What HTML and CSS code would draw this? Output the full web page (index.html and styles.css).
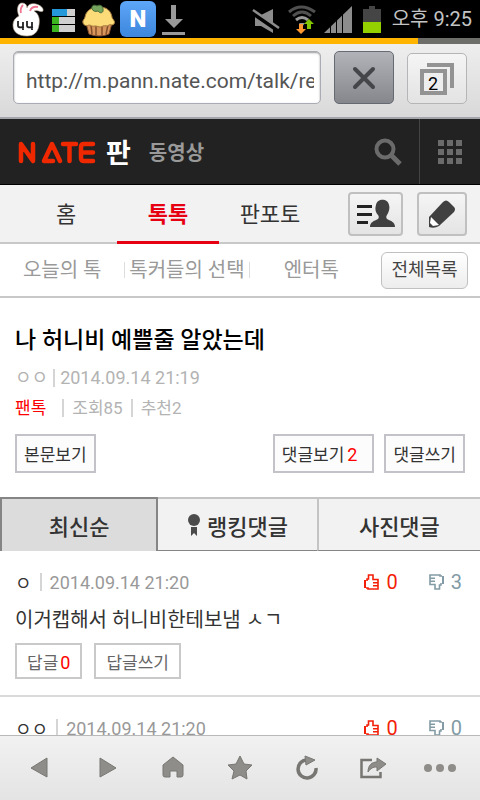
FILE: index.html
```
<!DOCTYPE html>
<html lang="ko">
<head>
<meta charset="UTF-8">
<meta name="viewport" content="width=device-width, initial-scale=1.0">
<title>나 허니비 예쁠줄 알았는데 | 네이트 판</title>
<link rel="stylesheet" href="styles.css">
</head>
<body>
  <!-- 공용 아이콘 -->
  <svg class="defs" aria-hidden="true">
    <symbol id="thumb" viewBox="0 0 16 16">
      <path d="M0 6h2v8H0z" fill="currentColor"/>
      <path d="M2 14h2v1h10V5.500H9V1H4.500v4H3v2" fill="none" stroke="currentColor" stroke-width="1.600"/>
      <path d="M9 8.700h5M9 11.800h5" stroke="currentColor" stroke-width="1.400"/>
    </symbol>
  </svg>

  <!-- 상태 표시줄 -->
  <div class="status">
    <div class="status-left">
      <svg width="34" height="36" viewBox="0 0 34 36">
        <path d="M7 15C4 8 6 2 10 2c4 0 5 3 5 5 1-4 5-5 9-4 4 1 8 4 7 7-2 2-6-2-9 0 5 3 6 8 5 14-1 8-6 11-12 11C6 35 1 31 1 24c0-4 2-7 6-9z" fill="#fff" stroke="#b9a692" stroke-width=".6"/>
        <path d="M9 12C8 8 9 6 11 4M18 10c1-3 3-5 8-4" fill="none" stroke="#ef7590" stroke-width="1.800"/>
        <path d="M6 20v5q0 2 6 1M11 21v8M15 20v5q0 2 6 1M20 21v8" fill="none" stroke="#222" stroke-width="1.800"/>
      </svg>
      <svg width="28" height="36" viewBox="0 0 28 36">
        <path d="M2 8h23v7H2zM2 16h23v7H2zM2 24h23v7H2z" fill="#cfcfcf"/>
        <path d="M2 8h15v7H2z" fill="#2498d8"/>
        <path d="M2 16h7v7H2zM2 24h7v7H2z" fill="#3cb521"/>
      </svg>
      <svg width="34" height="36" viewBox="0 0 34 36">
        <path d="M4 22l3 11q10 4 20 0l3-11z" fill="#d7965b" stroke="#87502c"/>
        <path d="M9 24l1 9M14 25v9M20 25v9M26 24l-2 9" stroke="#87502c" stroke-width="1.500"/>
        <path d="M1 22C0 19 3 18 3 16 4 10 9 6 17 6s12 4 13 10c0 2 4 4 2 7-2 2-4 0-5 1-2 2-4 0-6 1-3 2-5 0-8 0-3 1-4-1-6-1-2 1-5 1-6-2z" fill="#fbdc78" stroke="#a5773e"/>
        <path d="M10 8c-1-3 2-5 5-3 3-2 6 0 6 3 1 4-3 5-5 2-3 1-5 0-6-2z" fill="#75a45f" stroke="#4a6f3b"/>
      </svg>
      <div class="app-n">N</div>
      <svg width="28" height="36" viewBox="0 0 28 36">
        <path d="M11 4h5v14h7l-9 9-9-9h6zM2 31h23v3H2z" fill="#999"/>
      </svg>
    </div>
    <div class="status-right">
      <svg width="28" height="36" viewBox="0 0 28 36">
        <path d="M3 14h6l12-6v24L9 25H3z" fill="#8c8c8c"/>
        <path d="M0 11l26 18" stroke="#000" stroke-width="5"/>
        <path d="M1 9l26 18" stroke="#8c8c8c" stroke-width="2.500"/>
      </svg>
      <svg width="28" height="36" viewBox="0 0 28 36">
        <path d="M1 11q12-10 26 0M5 15q9-8 18 0" fill="none" stroke="#505050" stroke-width="3"/>
        <path d="M8 19q6-5 12 0" fill="none" stroke="#999" stroke-width="3"/>
        <path d="M11 22h6l-3 4z" fill="#999"/>
        <path d="M11 23h4v5h3l-5 5-5-5h3z" fill="#ff9831"/>
        <path d="M19 28v-5h-3l5-5 5 5h-3v5z" fill="#84c600"/>
      </svg>
      <svg width="28" height="36" viewBox="0 0 28 36">
        <path d="M0 32L28 5v27z" fill="#8c8c8c"/>
        <path d="M6.500 22v10M12.500 16v16M18.500 10v22" stroke="#000"/>
      </svg>
      <svg width="24" height="36" viewBox="0 0 24 36">
        <path d="M3 8h6V5h6v3h6v14H3z" fill="#454545"/>
        <path d="M3 21h18v11H3z" fill="#94cf00"/>
      </svg>
      <span class="clock">오후 9:25</span>
    </div>
  </div>
  <div class="progress"></div>

  <!-- 주소창 -->
  <form class="browser">
    <input class="url" type="text" aria-label="주소" value="http://m.pann.nate.com/talk/reply">
    <button class="stop" type="button" aria-label="중지">
      <svg width="24" height="24" viewBox="0 0 24 24"><path d="M3 3l18 18M21 3L3 21" stroke="#44464a" stroke-width="4" stroke-linecap="round"/></svg>
    </button>
    <button class="windows" type="button" aria-label="열린 창 2개">
      <svg width="34" height="34" viewBox="0 0 34 34"><path d="M7 3h25v23" fill="none" stroke="#939393" stroke-width="4"/><path d="M2 9h23v22H2z" fill="#eee" stroke="#939393" stroke-width="4"/></svg>
      <span class="window-count">2</span>
    </button>
  </form>

  <main class="page">
    <header class="header">
      <a class="logo" href="#" aria-label="NATE">
        <svg width="78" height="24" viewBox="0 0 78 24" fill="none" stroke="#f02800" stroke-width="4.500" stroke-linecap="round" stroke-linejoin="round">
          <path d="M3 21V4l12 17V4M35 21h-9L34 4l8 17M45 4h13M51.500 4v17M75 4H66q-3 0-3 3v11q0 3 3 3h9M64 12.500h11"/>
        </svg>
      </a>
      <a class="pann" href="#">판</a>
      <a class="video" href="#">동영상</a>
      <button class="search" type="button" aria-label="검색">
        <svg width="28" height="28" viewBox="0 0 28 28" fill="none" stroke="#6b6b6b"><circle cx="11" cy="11" r="8.500" stroke-width="4"/><path d="M17 17l9 9" stroke-width="5"/></svg>
      </button>
      <button class="all" type="button" aria-label="전체 서비스">
        <svg width="24" height="24" viewBox="0 0 24 24" fill="#6b6b6b"><path d="M0 0h6v6H0zM9 0h6v6H9zM18 0h6v6h-6zM0 9h6v6H0zM9 9h6v6H9zM18 9h6v6h-6zM0 18h6v6H0zM9 18h6v6H9zM18 18h6v6h-6z"/></svg>
      </button>
    </header>

    <nav class="gnb">
      <a href="#">홈</a>
      <a class="on" href="#">톡톡</a>
      <a href="#">판포토</a>
      <div class="gnb-btns">
        <button class="my" type="button" aria-label="마이 판">
          <svg width="40" height="30" viewBox="0 0 40 30"><path d="M1 6h15v3H1zM1 14h15v3H1zM1 22h11v3H1z" fill="#222"/><path d="M14 28c0-5 4-6 8-8 1-1 1-3 0-4-3-3-3-7-2-10 1-7 12-7 13 0 1 3 0 7-2 10-1 1-1 3 0 4 4 2 8 3 8 8z" fill="#404040"/></svg>
        </button>
        <button class="write" type="button" aria-label="글쓰기">
          <svg width="30" height="30" viewBox="0 0 30 30"><path d="M2 28V18L16 3q3-3 6 0l5 5q2 2 0 5L12 27q-5 3-10 1z" fill="#404040"/><path d="M4 18l8 8-6 1-3-3z" fill="#fff"/></svg>
        </button>
      </div>
    </nav>

    <nav class="lnb">
      <a href="#">오늘의 톡</a>
      <a href="#">톡커들의 선택</a>
      <a href="#">엔터톡</a>
      <button class="total" type="button">전체목록</button>
    </nav>

    <section class="post">
      <h1>나 허니비 예쁠줄 알았는데</h1>
      <p class="info first"><span>ㅇㅇ</span><i class="bar"></i><span>2014.09.14 21:19</span></p>
      <p class="info second"><a href="#">팬톡</a><i class="bar"></i><span>조회85</span><i class="bar"></i><span>추천2</span></p>
      <div class="post-btns">
        <button type="button">본문보기</button>
        <button class="view" type="button">댓글보기<em>2</em></button>
        <button type="button">댓글쓰기</button>
      </div>
    </section>

    <nav class="sort">
      <a class="on" href="#">최신순</a>
      <a href="#"><svg width="14" height="24" viewBox="0 0 14 24" fill="#4b4b4b"><circle cx="7" cy="7" r="6"/><path d="M4 14h6v9l-3-3-3 3z"/></svg>랭킹댓글</a>
      <a href="#">사진댓글</a>
    </nav>

    <article class="comment">
      <div class="comment-top">
        <span class="name">ㅇ</span><i class="bar"></i><span class="date">2014.09.14 21:20</span>
        <button class="up" type="button"><svg width="16" height="16"><use href="#thumb"/></svg>0</button>
        <button class="down" type="button"><svg width="16" height="16"><use href="#thumb"/></svg>3</button>
      </div>
      <p class="text">이거캡해서 허니비한테보냄 ㅅㄱ</p>
      <div class="reply">
        <button type="button">답글<em>0</em></button>
        <button type="button">답글쓰기</button>
      </div>
    </article>

    <article class="comment">
      <div class="comment-top">
        <span class="name">ㅇㅇ</span><i class="bar"></i><span class="date">2014.09.14 21:20</span>
        <button class="up" type="button"><svg width="16" height="16"><use href="#thumb"/></svg>0</button>
        <button class="down" type="button"><svg width="16" height="16"><use href="#thumb"/></svg>0</button>
      </div>
    </article>
  </main>

  <!-- 하단 툴바 -->
  <nav class="toolbar">
    <button type="button" aria-label="뒤로"><svg viewBox="0 0 28 28"><path d="M5 14L21 4v19z"/></svg></button>
    <button type="button" aria-label="앞으로"><svg viewBox="0 0 28 28"><path d="M23 14L7 4v19z"/></svg></button>
    <button type="button" aria-label="홈"><svg viewBox="0 0 28 28"><path d="M14 3l10 8v10q0 2-2 2h-4v-6h-7v6H6q-2 0-2-2V11z"/></svg></button>
    <button type="button" aria-label="즐겨찾기"><svg viewBox="0 0 28 28"><path d="M14 2l4 8 8 1-6 6 1 8-7-4-8 4 2-8-6-6 8-1z"/></svg></button>
    <button type="button" aria-label="새로고침"><svg viewBox="0 0 28 28"><path d="M14 6a9 9 0 1 0 9 8" fill="none" stroke-width="3.500"/><path d="M12 2l10 4-9 5z"/></svg></button>
    <button type="button" aria-label="공유"><svg viewBox="0 0 28 28"><path d="M13 6H2.500v17h19v-5" fill="none" stroke-width="2.500"/><path d="M9 18c0-7 4-10 9-10V4l9 6-9 7v-4c-4 0-6 1-9 5z"/></svg></button>
    <button type="button" aria-label="더보기"><svg class="dots" viewBox="0 0 34 28"><circle cx="5" cy="14" r="4"/><circle cx="17" cy="14" r="4"/><circle cx="29" cy="14" r="4"/></svg></button>
  </nav>
</body>
</html>
```
FILE: styles.css
```
* {
  box-sizing: border-box;
}
body {
  margin: 0;
  height: 100vh;
  display: flex;
  flex-direction: column;
  overflow: hidden;
  background: #fff;
  color: #333;
  font-family: Roboto, "Noto Sans CJK KR", sans-serif;
}
a {
  color: inherit;
  text-decoration: none;
}
button {
  margin: 0;
  padding: 0;
  border: 0;
  background: none;
  color: inherit;
  font: inherit;
  white-space: nowrap;
  cursor: pointer;
}
svg {
  display: block;
  flex: none;
}
em {
  font-style: normal;
  color: #f00;
}
.defs {
  position: absolute;
  width: 0;
  height: 0;
}

/* 상태 표시줄 */
.status {
  flex: none;
  height: 38px;
  display: flex;
  justify-content: space-between;
  padding: 0 8px 0 12px;
  background: #000;
}
.status-left, .status-right {
  display: flex;
  align-items: center;
  gap: 4px;
}
.status-right {
  gap: 8px;
}
.app-n {
  width: 36px;
  height: 36px;
  border-radius: 6px;
  background: linear-gradient(#5da6f8, #3c86dc);
  color: #fff;
  font-size: 24px;
  font-weight: 900;
  line-height: 36px;
  text-align: center;
}
.clock {
  color: #c4c4c4;
  font-size: 20px;
  line-height: 36px;
}
.progress {
  flex: none;
  height: 6px;
  background: linear-gradient(to right, #ffb500 87%, #6d6d69 87%);
}

/* 주소창 */
.browser {
  flex: none;
  height: 75px;
  display: flex;
  align-items: flex-start;
  gap: 13px;
  margin: 0;
  padding: 7px 13px;
  border-bottom: 2px solid #a3a5ab;
  background: linear-gradient(#eee, #d9d9d9);
}
.url {
  flex: 1;
  min-width: 0;
  height: 53px;
  padding: 6px 6px 0 12px;
  border: 1px solid #aaacb3;
  border-radius: 5px;
  background: #fff;
  box-shadow: inset 0 1px 2px #999;
  color: #555;
  font: 21px Roboto, sans-serif;
}
.stop, .windows {
  display: flex;
  align-items: center;
  justify-content: center;
  width: 60px;
  height: 53px;
  border: 1px solid #666a72;
  border-radius: 5px;
  background: linear-gradient(#b1b3b9, #85878d);
}
.windows {
  position: relative;
  height: 51px;
  margin-top: 2px;
  border: 1px solid #b5b5b8;
  background: linear-gradient(#f5f5f5, #e3e3e3);
}
.window-count {
  position: absolute;
  left: 20px;
  top: 20px;
  color: #000;
  font-size: 18px;
  line-height: 20px;
}

/* 네이트 헤더 */
.page {
  flex: 1;
  min-height: 0;
  overflow: hidden;
}
.header {
  display: flex;
  align-items: center;
  height: 66px;
  padding-left: 18px;
  border-bottom: 1px solid #000;
  background: #222;
}
.pann {
  margin-left: 10px;
  color: #fff;
  font-size: 27px;
  font-weight: 700;
}
.video {
  margin-left: 18px;
  color: #999;
  font-size: 20px;
  font-weight: 700;
}
.search {
  margin-left: auto;
  padding: 0 17px;
}
.all {
  height: 65px;
  padding: 0 18px;
  border-left: 1px solid #444;
}

/* 메뉴 */
.gnb {
  display: flex;
  height: 59px;
  padding-left: 15px;
  border-bottom: 2px solid #c8c8c8;
  background: #f2f2f2;
  font-size: 22px;
  line-height: 60px;
  text-align: center;
}
.gnb a {
  width: 102px;
  height: 59px;
}
.gnb .on {
  border-bottom: 3px solid #e60012;
  color: #e60012;
  font-weight: 700;
}
.gnb-btns {
  display: flex;
  gap: 14px;
  margin: 7px 13px 0 auto;
}
.gnb-btns button {
  display: flex;
  align-items: center;
  justify-content: center;
  width: 50px;
  height: 44px;
  border: 2px solid #c0c0c0;
  border-radius: 4px;
  background: linear-gradient(#f5f5f5, #e4e4e4);
}
.gnb-btns .my {
  width: 55px;
}
.lnb {
  display: grid;
  grid-template-columns: 1fr 1fr 1fr 107px;
  align-items: center;
  height: 54px;
  border-bottom: 2px solid #c8c8c8;
  color: #999;
  font-size: 20px;
  line-height: 16px;
  text-align: center;
  white-space: nowrap;
}
.lnb a + a {
  border-left: 1px solid #ddd;
}
.total {
  width: 87px;
  height: 37px;
  margin-left: 8px;
  border: 1px solid #c0c0c0;
  border-radius: 6px;
  background: linear-gradient(#fff, #ededed);
  color: #444;
  font-size: 18px;
}

/* 본문 */
.post {
  padding: 26px 15px 24px;
}
h1 {
  margin: 0 0 5px;
  color: #000;
  font-size: 23px;
  font-weight: 500;
  line-height: 34px;
}
.bar {
  width: 2px;
  height: 18px;
  background: #d5d5d5;
}
.info {
  display: flex;
  align-items: center;
  gap: 8px;
  margin: 0;
  color: #b3b3b3;
  font-size: 18px;
  line-height: 30px;
}
.info a {
  margin-right: 8px;
  color: #f00;
}
.first {
  gap: 5px;
}
.second {
  font-size: 17px;
}
.post-btns {
  display: flex;
  gap: 10px;
  margin-top: 11px;
}
.post-btns button {
  height: 39px;
  padding: 0 7px;
  border: 2px solid #c2c2c8;
  background: #fcfcfc;
  font-size: 17px;
}
.post-btns .view {
  margin-left: auto;
  padding-right: 15px;
}
.post-btns em {
  margin-left: 3px;
  font-size: 18px;
}

/* 정렬 탭 */
.sort {
  display: grid;
  grid-template-columns: 33% 33% 34%;
  height: 54px;
}
.sort a {
  display: flex;
  align-items: center;
  justify-content: center;
  gap: 6px;
  border-top: 2px solid #c4c4c4;
  border-bottom: 1px solid #858585;
  background: #f2f2f2;
  font-size: 22px;
  font-weight: 500;
}
.sort a + a + a {
  border-left: 2px solid #c4c4c4;
}
.sort .on {
  border: 2px solid #858585;
  border-bottom: 0;
  background: #dcdcdc;
}

/* 댓글 */
.comment {
  padding: 16px 18px 16px 15px;
  border-bottom: 2px solid #dadada;
}
.comment-top {
  display: flex;
  align-items: center;
  height: 30px;
  font-size: 18px;
}
.comment-top .bar {
  margin: 0 8px;
}
.date {
  color: #999;
}
.up, .down {
  display: flex;
  align-items: center;
  gap: 7px;
  font-size: 20px;
}
.up {
  margin-left: auto;
  color: #f31e08;
}
.down {
  margin-left: 30px;
  color: #829ba5;
}
.down svg {
  transform: rotate(180deg);
}
.text {
  margin: 5px 0;
  font-size: 20px;
  line-height: 36px;
}
.reply {
  display: flex;
  gap: 12px;
}
.reply button {
  height: 36px;
  padding: 0 10px;
  border: 2px solid #c9c9c9;
  background: #fff;
  color: #666;
  font-size: 17px;
}
.reply em {
  margin-left: 2px;
  font-size: 18px;
}

/* 하단 툴바 */
.toolbar {
  flex: none;
  display: flex;
  height: 65px;
  padding: 0 7px;
  border-top: 1px solid #b9b9b9;
  background: linear-gradient(#f1f1f1, #e4e4e4);
}
.toolbar button {
  flex: 1;
  display: flex;
  align-items: center;
  justify-content: center;
}
.toolbar svg {
  width: 28px;
  height: 28px;
  fill: #8e8d89;
  stroke: #777672;
}
.toolbar .dots {
  width: 34px;
  stroke: none;
}
```
